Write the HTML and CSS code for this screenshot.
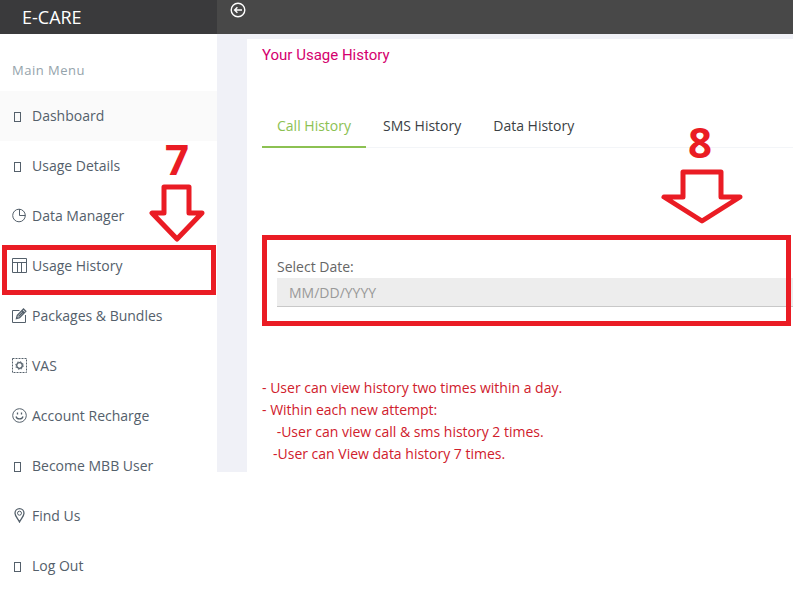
FILE: index.html
```html
<!DOCTYPE html>
<html lang="en">
<head>
<meta charset="UTF-8">
<meta name="viewport" content="width=device-width, initial-scale=1.0">
<title>E-CARE - Usage History</title>
<link rel="stylesheet" href="styles.css">
</head>
<body>

<header class="topbar">
    <a class="brand" href="#">E-CARE</a>
    <div class="topbar-main">
        <button class="menu-toggle" type="button" aria-label="Toggle menu">
            <svg class="toggle-icon" viewBox="0 0 16 16"><circle cx="8" cy="8" r="6.8"/><path d="M12 8H4.6M7.4 5.2L4.6 8l2.8 2.8"/></svg>
        </button>
    </div>
</header>

<div class="layout">
    <nav class="sidebar">
        <h2 class="menu-title">Main Menu</h2>
        <ul class="menu">
            <li class="menu-item active"><a href="#"><span class="icon"><span class="box"></span></span>Dashboard</a></li>
            <li class="menu-item"><a href="#"><span class="icon"><span class="box"></span></span>Usage Details</a></li>
            <li class="menu-item"><a href="#"><svg class="icon" viewBox="0 0 15 15"><circle cx="7" cy="7.500" r="6.300"/><path d="M7.500 1v6.500h6"/></svg>Data Manager</a></li>
            <li class="menu-item">
                <a href="#"><svg class="icon" viewBox="0 0 15 15"><path d="M.5.5h14v14H.5zM.5 4.500h14M5.500 4.500v10M9.500 4.500v10"/></svg>Usage History</a>
                <div class="step step-menu">
                    <span class="step-number">7</span>
                    <svg class="arrow arrow-narrow" viewBox="0 0 56 58"><path d="M15 3h25v26h13L28 55 3 29h12z"/></svg>
                </div>
                <div class="mark mark-menu"></div>
            </li>
            <li class="menu-item"><a href="#"><svg class="icon" viewBox="0 0 15 15"><path d="M7.500 2.500h-7v12h13V7"/><path class="thick" d="M4.500 10.500l.8-3.200L11.500 1l2.300 2.200-6.200 6.400zM10 2.500l2.300 2.300M6.500 8.500l5-5"/></svg>Packages &amp; Bundles</a></li>
            <li class="menu-item"><a href="#"><svg class="icon" viewBox="0 0 15 15"><path stroke-dasharray="2 1" d="M.5.5h14v14H.5z"/><circle class="thick" cx="7.500" cy="7.500" r="2.800"/><circle cx="7.500" cy="7.500" r="3.800" stroke-dasharray="1.400 1.580"/></svg>VAS</a></li>
            <li class="menu-item"><a href="#"><svg class="icon" viewBox="0 0 15 15"><circle cx="7.500" cy="7.500" r="6.800"/><path class="thick" d="M4 8.500c1 3.200 6 3.200 7 0M5.500 4.500v2M9.500 4.500v2"/></svg>Account Recharge</a></li>
            <li class="menu-item"><a href="#"><span class="icon"><span class="box"></span></span>Become MBB User</a></li>
            <li class="menu-item"><a href="#"><svg class="icon" viewBox="0 0 15 15"><path class="thick" d="M7.500 14C6 11 3 8 3 5.200a4.500 4.500 0 0 1 9 0C12 8 9 11 7.500 14z"/><circle cx="7.500" cy="5.200" r="2"/></svg>Find Us</a></li>
            <li class="menu-item"><a href="#"><span class="icon"><span class="box"></span></span>Log Out</a></li>
        </ul>
    </nav>

    <main class="content">
        <section class="card">
            <h1 class="card-title">Your Usage History</h1>

            <ul class="tabs">
                <li><a class="tab active" href="#">Call History</a></li>
                <li><a class="tab" href="#">SMS History</a></li>
                <li><a class="tab" href="#">Data History</a></li>
            </ul>

            <form class="date-form">
                <label for="date">Select Date:</label>
                <input class="date-input" type="text" id="date" placeholder="MM/DD/YYYY">
                <div class="step step-date">
                    <span class="step-number">8</span>
                    <svg class="arrow arrow-wide" viewBox="0 0 84 56"><path d="M23 3h38v25h19L42 52 4 28h19z"/></svg>
                </div>
                <div class="mark mark-date"></div>
            </form>

            <div class="notes">
                <p>- User can view history two times within a day.</p>
                <p>- Within each new attempt:</p>
                <p class="sub-note">&nbsp;-User can view call &amp; sms history 2 times.</p>
                <p class="sub-note">-User can View data history 7 times.</p>
            </div>
        </section>
    </main>
</div>

</body>
</html>
```

FILE: styles.css
```css
* {
    box-sizing: border-box;
}
body {
    margin: 0;
    padding-right: 1px;
    background-color: #fff;
    font-family: "Open Sans", "Noto Sans", sans-serif;
    font-size: 14px;
    line-height: 22px;
    color: #54606b;
}
a {
    color: inherit;
    text-decoration: none;
}
ul {
    list-style: none;
    margin: 0;
    padding: 0;
}

/* top bar */
.topbar {
    display: flex;
    height: 34px;
}
.brand {
    width: 217px;
    padding-left: 22px;
    background-color: #3a3a3c;
    color: #fff;
    font-size: 18px;
    line-height: 34px;
}
.topbar-main {
    flex: 1;
    background-color: #484848;
}
.menu-toggle {
    display: block;
    margin: 2px 0 0 13px;
    padding: 0;
    border: none;
    background: none;
    cursor: pointer;
}
.toggle-icon {
    display: block;
    width: 16px;
    height: 16px;
    fill: none;
    stroke: #fff;
    stroke-width: 1.4;
}

/* sidebar */
.layout {
    display: flex;
    align-items: flex-start;
}
.sidebar {
    width: 217px;
    flex-shrink: 0;
}
.menu-title {
    margin: 0;
    padding: 25px 12px 10px;
    font-size: 13px;
    font-weight: normal;
    letter-spacing: 0.5px;
    color: #95a3ab;
}
.menu-item {
    position: relative;
}
.menu-item a {
    display: flex;
    align-items: center;
    gap: 5px;
    height: 50px;
    padding-left: 12px;
}
.menu-item.active {
    background-color: #fafafa;
}
.icon {
    width: 15px;
    height: 15px;
    margin-bottom: 2px;
    fill: none;
    stroke: #54606b;
}
.icon .thick {
    stroke-width: 1.3;
}
.box {
    display: block;
    width: 7px;
    height: 10px;
    margin: 4px 0 0 2px;
    border: 1px solid #54606b;
}

/* content */
.content {
    flex: 1;
    min-width: 0;
    padding: 5px 0 0 30px;
    background-color: #f0f1f7;
}
.card {
    padding: 5px 0 7px 15px;
    background-color: #fff;
}
.card-title {
    margin: 0;
    font-family: Roboto, sans-serif;
    font-size: 15px;
    font-weight: normal;
    color: #d4006e;
}
.tabs {
    display: flex;
    gap: 2px;
    margin-top: 38px;
    border-bottom: 1px solid #f3f5f8;
}
.tab {
    display: block;
    margin-bottom: -1px;
    padding: 11px 15px 9px;
    border-bottom: 2px solid transparent;
    color: #3b3f44;
}
.tab.active {
    color: #8cc152;
    border-bottom-color: #8cc152;
}
.date-form {
    position: relative;
    margin-top: 87px;
    padding: 21px 0 19px 15px;
}
.date-form label {
    display: block;
    color: #666;
}
.date-input {
    display: block;
    width: 100%;
    height: 29px;
    padding: 0 12px;
    border: none;
    border-bottom: 1px solid #c8c8c8;
    border-radius: 0;
    background-color: #ededed;
    font: inherit;
    color: #555;
}
.date-input::placeholder {
    color: #999;
}
.notes {
    margin-top: 51px;
    color: #d0202c;
}
.notes p {
    margin: 0;
}
.notes .sub-note {
    padding-left: 11px;
}

/* guide marks over the page */
.mark {
    position: absolute;
    border: 5px solid #ea1c24;
    pointer-events: none;
}
.mark-menu {
    top: 4px;
    left: 2px;
    right: 1px;
    height: 50px;
}
.mark-date {
    top: 0;
    left: 0;
    right: 2px;
    bottom: 0;
}
.step {
    position: absolute;
    display: flex;
    flex-direction: column;
    color: #ea1c24;
    pointer-events: none;
}
.step-menu {
    left: 149px;
    bottom: 49px;
}
.step-date {
    right: 49px;
    bottom: 101px;
}
.step-number {
    font-size: 42px;
    font-weight: bold;
    line-height: 46px;
}
.step-menu .step-number {
    padding: 0 0 2px 16px;
}
.step-date .step-number {
    padding: 0 0 4px 28px;
}
.arrow {
    fill: #fff;
    stroke: #ea1c24;
    stroke-width: 5;
    stroke-linejoin: round;
}
.arrow-narrow {
    width: 56px;
    height: 58px;
}
.arrow-wide {
    width: 84px;
    height: 56px;
}
```
